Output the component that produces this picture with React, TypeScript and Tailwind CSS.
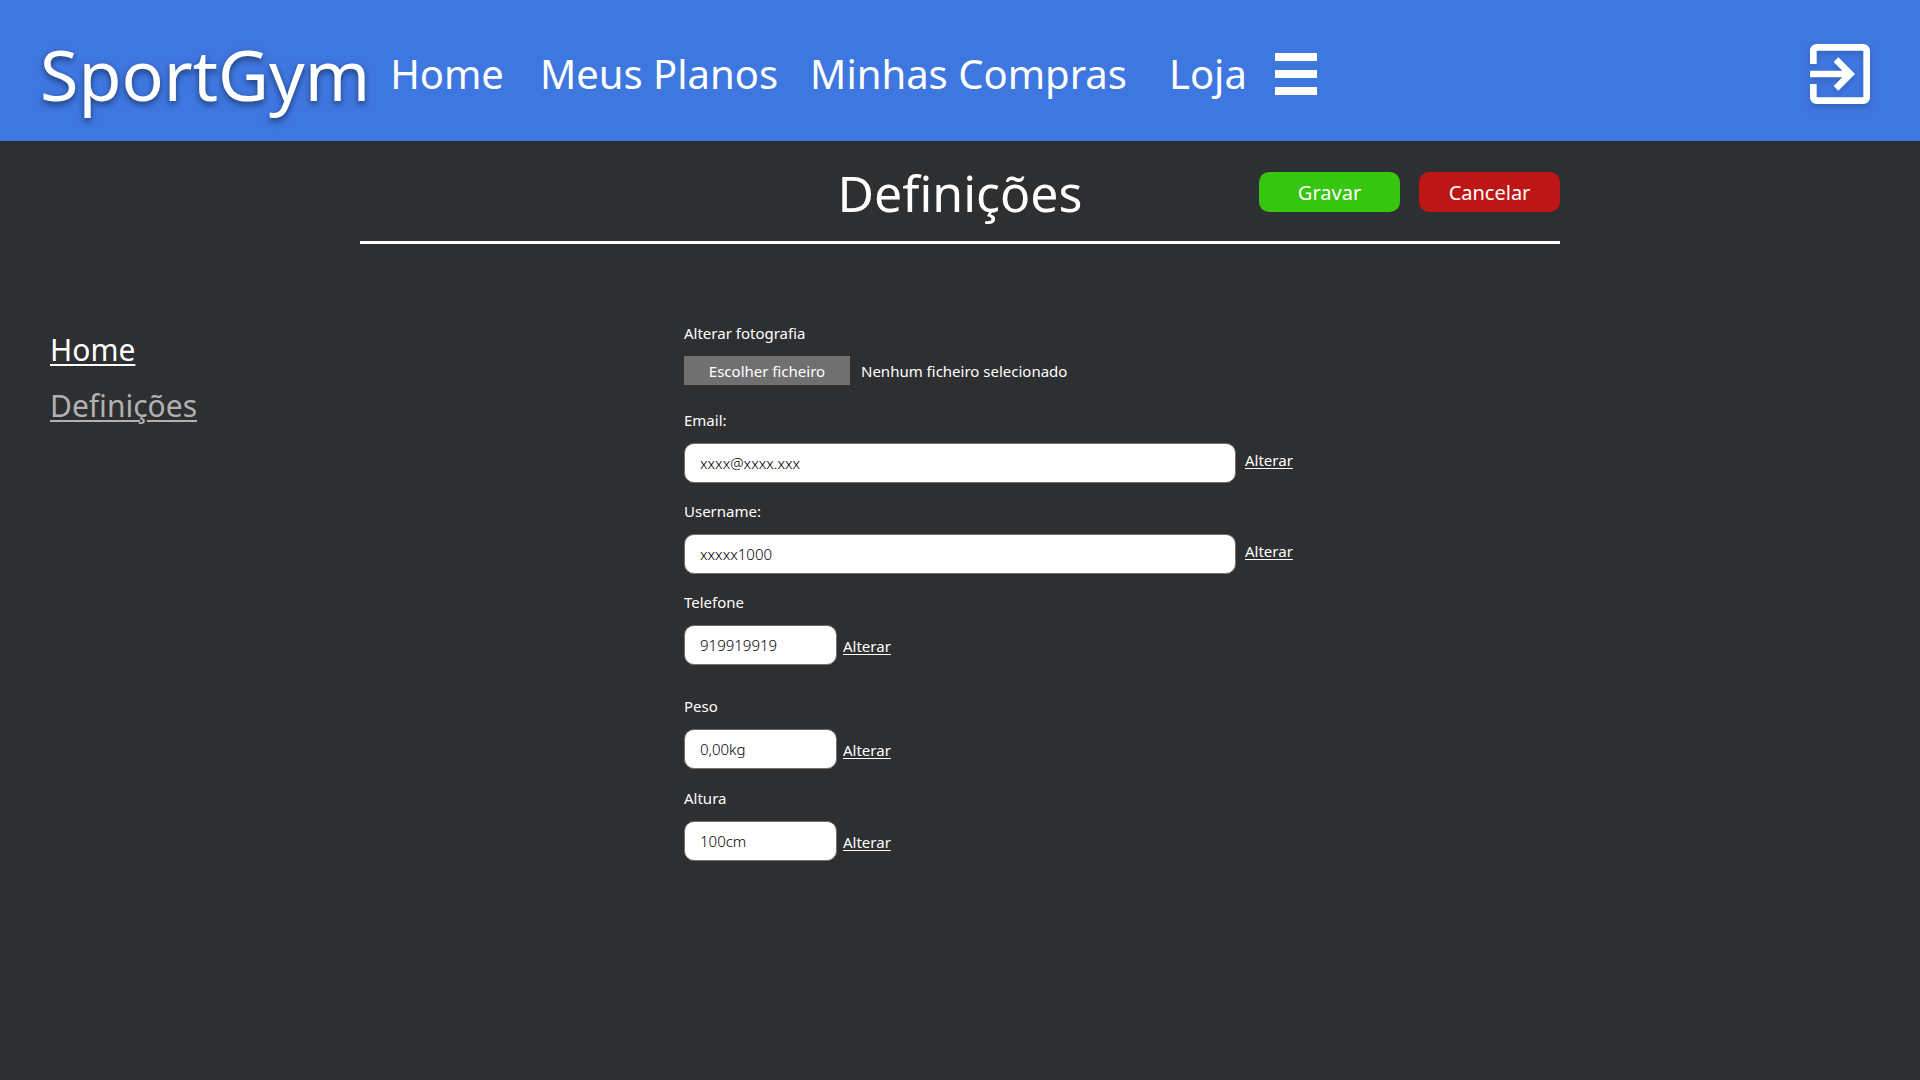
import type { ReactNode } from "react";

const navLinks = [
  { label: "Home", className: "mr-9" },
  { label: "Meus Planos", className: "mr-8" },
  { label: "Minhas Compras", className: "mr-[42px]" },
  { label: "Loja", className: "mr-7" },
];

type FieldProps = {
  id: string;
  label: string;
  type?: string;
  value: string;
  wide?: boolean;
  className?: string;
};

function Field({ id, label, type = "text", value, wide = false, className = "mt-4" }: FieldProps) {
  return (
    <div className={className}>
      <label htmlFor={id} className="block">
        {label}
      </label>
      <div className={`mt-[11px] flex items-center ${wide ? "gap-[9px]" : "gap-[6px]"}`}>
        <input
          id={id}
          type={type}
          defaultValue={value}
          className={`h-10 rounded-[10px] border border-[#707070] bg-white px-[15px] font-light text-black ${
            wide ? "w-[552px]" : "w-[153px]"
          }`}
        />
        <a href="#" className={`underline underline-offset-2 ${wide ? "pb-1.5" : "pt-0.5"}`}>
          Alterar
        </a>
      </div>
    </div>
  );
}

function ActionButton({ color, children }: { color: string; children: ReactNode }) {
  return (
    <button type="button" className={`h-10 w-[141px] rounded-[10px] pt-0.5 text-xl ${color}`}>
      {children}
    </button>
  );
}

export default function App() {
  return (
    <div className="min-h-screen bg-[#2e2f31] font-['Noto_Sans','Open_Sans',sans-serif] text-[15px] leading-6 text-white">
      <header className="flex h-[141px] items-center bg-[#3e77e0] px-10 pt-1.5">
        <a href="#" className="mr-5 text-[70px] leading-[90px] [text-shadow:0_3px_6px_rgba(0,0,0,0.5)]">
          SportGym
        </a>
        <nav className="flex items-center text-[40px] leading-[50px]">
          {navLinks.map((link) => (
            <a key={link.label} href="#" className={link.className}>
              {link.label}
            </a>
          ))}
          <button type="button" aria-label="Menu" className="flex flex-col gap-[9px]">
            <span className="h-2 w-[42px] bg-white" />
            <span className="h-2 w-[42px] bg-white" />
            <span className="h-2 w-[42px] bg-white" />
          </button>
        </nav>
        <button type="button" aria-label="Sair" className="ml-auto">
          <svg
            viewBox="0 0 24 24"
            fill="currentColor"
            className="size-20 drop-shadow-[0_3px_3px_rgba(0,0,0,0.16)]"
          >
            <path d="M10.09 15.59L11.5 17l5-5-5-5-1.41 1.41L12.67 11H3v2h9.67l-2.58 2.59zM19 3H5c-1.11 0-2 .9-2 2v4h2V5h14v14H5v-4H3v4c0 1.1.89 2 2 2h14c1.1 0 2-.9 2-2V5c0-1.1-.9-2-2-2z" />
          </svg>
        </button>
      </header>

      <div className="mx-auto grid h-[103px] max-w-[1200px] grid-cols-[1fr_auto_1fr] items-center border-b-[3px] border-white">
        <h1 className="col-start-2 pt-1 text-[50px] leading-[60px]">Definições</h1>
        <div className="flex justify-end gap-[19px] pt-0.5">
          <ActionButton color="bg-[#35c60d]">Gravar</ActionButton>
          <ActionButton color="bg-[#bd1616]">Cancelar</ActionButton>
        </div>
      </div>

      <div className="grid grid-cols-[634fr_1236fr] pt-[77px] pl-[50px]">
        <nav className="flex flex-col items-start gap-4 pt-[9px] text-[30px] leading-10">
          <a href="#" className="underline decoration-2 underline-offset-[3px]">
            Home
          </a>
          <a href="#" className="text-[#b1b1b1] underline decoration-2 underline-offset-[3px]">
            Definições
          </a>
        </nav>

        <form>
          <label htmlFor="photo" className="block">
            Alterar fotografia
          </label>
          <div className="mt-[11px] flex items-center gap-[11px]">
            <button id="photo" type="button" className="h-[29px] w-[166px] bg-[#707070]">
              Escolher ficheiro
            </button>
            <span>Nenhum ficheiro selecionado</span>
          </div>
          <Field id="email" label="Email:" type="email" value="xxxx@xxxx.xxx" wide className="mt-[23px]" />
          <Field id="username" label="Username:" value="xxxxx1000" wide />
          <Field id="phone" label="Telefone" type="tel" value="919919919" />
          <Field id="weight" label="Peso" value="0,00kg" className="mt-[29px]" />
          <Field id="height" label="Altura" value="100cm" className="mt-[17px]" />
        </form>
      </div>
    </div>
  );
}
